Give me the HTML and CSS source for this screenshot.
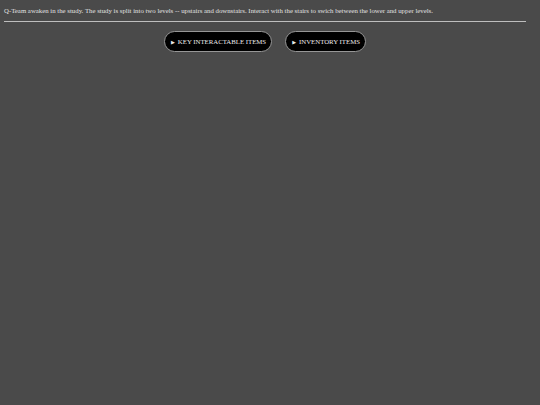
FILE: index.html
```html
<!DOCTYPE html>
<html>
<head>
<link rel="stylesheet" href="styles.css">
</head>
<body>
<div class="page">
    <p class="intro">Q-Team awaken in the study. The study is split into two levels -- upstairs and downstairs. Interact with the stairs to swich between the lower and upper levels.</p>
    <hr class="rule">
    <div class="buttons">
        <button class="pill"><span class="arrow">&#9654;</span>KEY INTERACTABLE ITEMS</button>
        <button class="pill"><span class="arrow">&#9654;</span>INVENTORY ITEMS</button>
    </div>
</div>
</body>
</html>
```

FILE: styles.css
```css
html, body {
    margin: 0;
    padding: 0;
    background-color: rgb(74, 74, 74);
    height: 100%;
}
.page {
    padding: 4px 14px 0px 4px;
    font-family: "Liberation Serif", "DejaVu Serif", serif;
    color: rgb(225, 225, 225);
}
.intro {
    margin: 0px;
    padding-top: 3px;
    font-size: 6.8px;
    line-height: 8px;
}
.rule {
    margin: 6px 0px 0px 0px;
    border: none;
    border-top: 1px solid rgb(190, 190, 190);
    height: 0px;
}
.buttons {
    display: flex;
    justify-content: center;
    gap: 13px;
    margin-top: 9px;
}
.pill {
    background-color: rgb(0, 0, 0);
    color: rgb(235, 235, 235);
    border: 1px solid rgb(150, 150, 150);
    border-radius: 11px;
    height: 21px;
    padding: 0px 5px 0px 6px;
    font-family: "Liberation Serif", "DejaVu Serif", serif;
    font-size: 6.8px;
    display: flex;
    align-items: center;
}
.arrow {
    font-size: 5px;
    margin-right: 3px;
}
```
